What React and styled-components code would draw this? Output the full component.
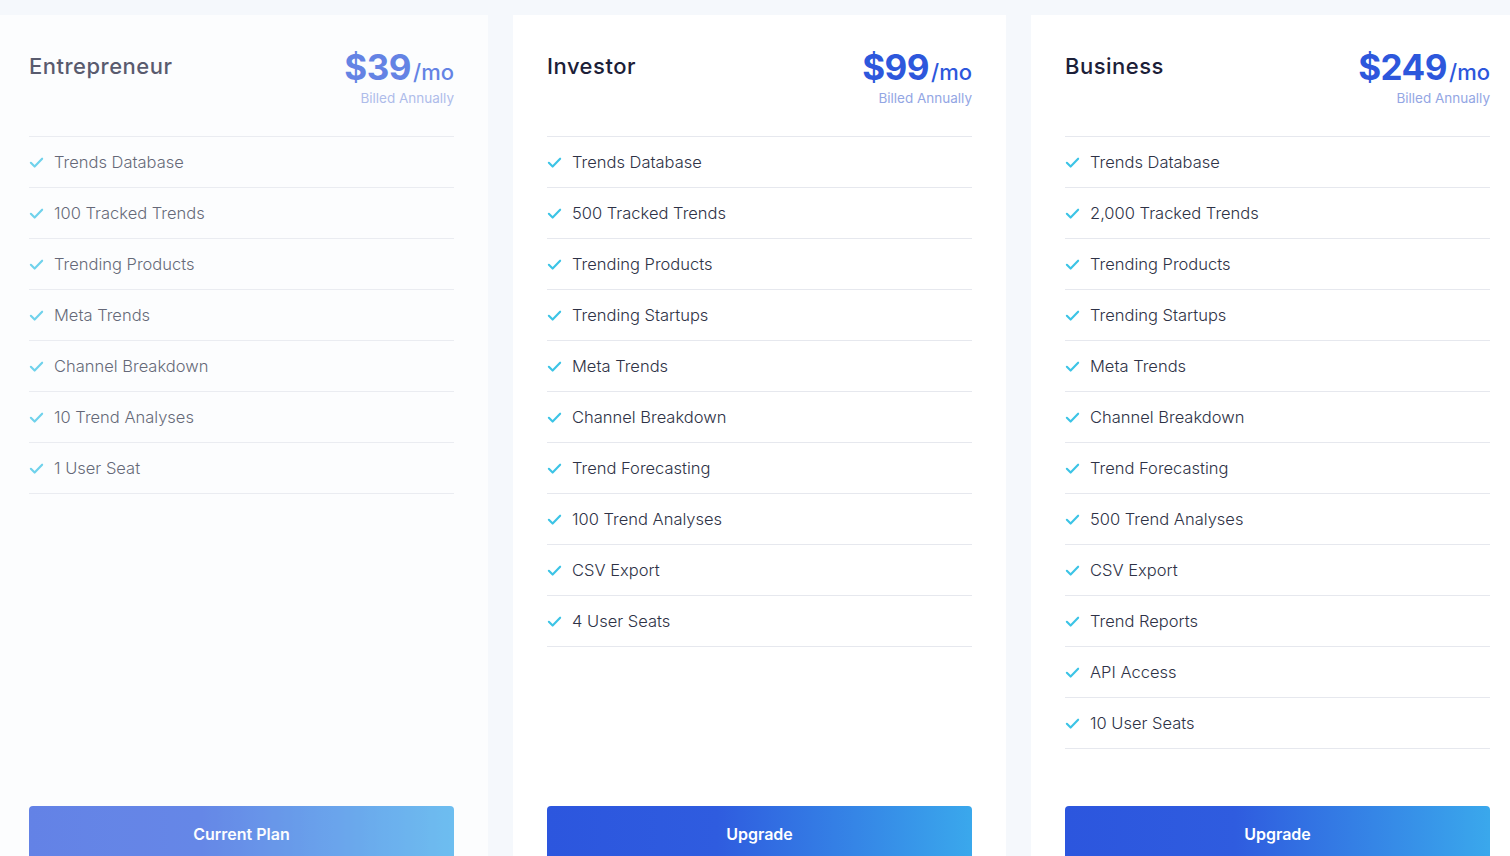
import React from 'react';
import styled, { createGlobalStyle } from 'styled-components';

const GlobalStyle = createGlobalStyle`
  html, body {
    margin: 0;
    padding: 0;
    background: #f5f8fc;
    font-family: Inter, "Noto Sans", sans-serif;
    overflow: hidden;
  }
`;

const Page = styled.div`
  display: flex;
  gap: 25px;
  padding-top: 15px;
  margin-left: -5px;
  width: 1529px;
`;

const Card = styled.div`
  flex: 0 0 493px;
  box-sizing: border-box;
  height: 881px;
  padding: 34px;
  background: #ffffff;
  display: flex;
  flex-direction: column;
  opacity: ${(p) => (p.faded ? 0.72 : 1)};
`;

const Header = styled.div`
  display: flex;
  justify-content: space-between;
  align-items: flex-start;
  margin-bottom: 29px;
`;

const Title = styled.div`
  font-size: 22px;
  line-height: 34px;
  font-weight: 500;
  color: #1c2038;
  letter-spacing: 0.5px;
`;

const PriceBlock = styled.div`
  display: flex;
  flex-direction: column;
  align-items: flex-end;
`;

const Price = styled.div`
  display: flex;
  align-items: baseline;
  height: 36px;
  color: #2d57dc;
`;

const Amount = styled.span`
  font-size: 35px;
  line-height: 36px;
  font-weight: 700;
  letter-spacing: -0.5px;
`;

const Per = styled.span`
  font-size: 22px;
  line-height: 22px;
  font-weight: 500;
  margin-left: 2px;
`;

const Billed = styled.div`
  margin-top: 4px;
  font-size: 13.5px;
  line-height: 18px;
  color: #93a6e4;
`;

const List = styled.ul`
  list-style: none;
  margin: 0;
  padding: 0;
  border-top: 1px solid #e6e8ee;
`;

const Item = styled.li`
  display: flex;
  align-items: center;
  height: 50px;
  border-bottom: 1px solid #e6e8ee;
  font-size: 16.5px;
  font-weight: 300;
  color: #2e3246;
  gap: 10px;
`;

const Button = styled.button`
  margin-top: auto;
  height: 56px;
  border: none;
  border-radius: 4px;
  background: linear-gradient(90deg, #2c56de 0%, #2f5cdf 40%, #3aa8ec 100%);
  color: #ffffff;
  font-family: inherit;
  font-size: 16px;
  font-weight: 600;
  cursor: pointer;
`;

const Check = () => (
  <svg width="15" height="15" viewBox="0 0 24 24" fill="none" stroke="#3cc4e6" strokeWidth="3.4" strokeLinecap="round" strokeLinejoin="round">
    <path d="M3 12.5l6 6L21 6" />
  </svg>
);

const plans = [
  {
    name: 'Entrepreneur',
    price: '$39',
    button: 'Current Plan',
    faded: true,
    features: ['Trends Database', '100 Tracked Trends', 'Trending Products', 'Meta Trends', 'Channel Breakdown', '10 Trend Analyses', '1 User Seat'],
  },
  {
    name: 'Investor',
    price: '$99',
    button: 'Upgrade',
    features: ['Trends Database', '500 Tracked Trends', 'Trending Products', 'Trending Startups', 'Meta Trends', 'Channel Breakdown', 'Trend Forecasting', '100 Trend Analyses', 'CSV Export', '4 User Seats'],
  },
  {
    name: 'Business',
    price: '$249',
    button: 'Upgrade',
    features: ['Trends Database', '2,000 Tracked Trends', 'Trending Products', 'Trending Startups', 'Meta Trends', 'Channel Breakdown', 'Trend Forecasting', '500 Trend Analyses', 'CSV Export', 'Trend Reports', 'API Access', '10 User Seats'],
  },
];

const App = () => (
  <>
    <GlobalStyle />
    <Page>
      {plans.map((plan) => (
        <Card key={plan.name} faded={plan.faded}>
          <Header>
            <Title>{plan.name}</Title>
            <PriceBlock>
              <Price>
                <Amount>{plan.price}</Amount>
                <Per>/mo</Per>
              </Price>
              <Billed>Billed Annually</Billed>
            </PriceBlock>
          </Header>
          <List>
            {plan.features.map((f) => (
              <Item key={f}>
                <Check />
                {f}
              </Item>
            ))}
          </List>
          <Button>{plan.button}</Button>
        </Card>
      ))}
    </Page>
  </>
);

export default App;
